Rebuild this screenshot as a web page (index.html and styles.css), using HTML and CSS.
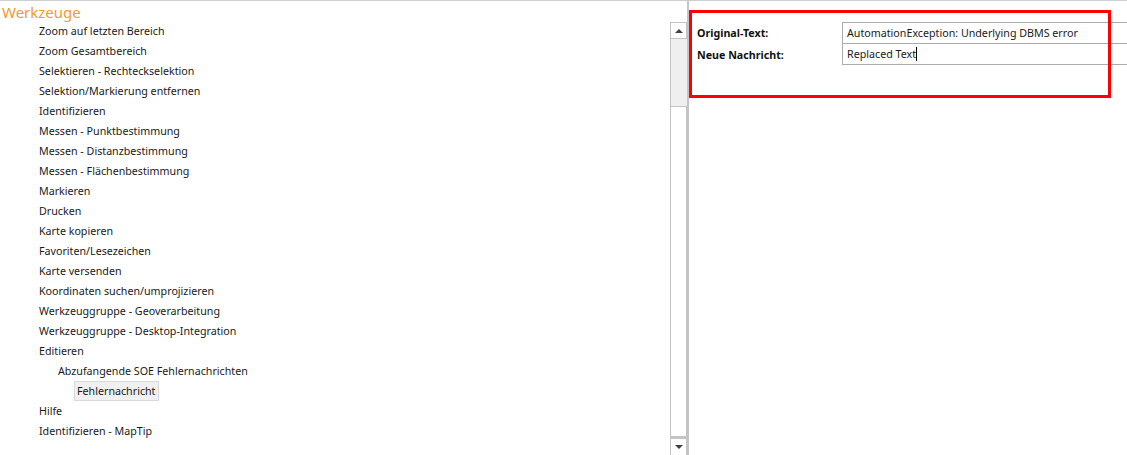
FILE: index.html
```html
<!DOCTYPE html>
<html>
<head>
<meta charset="utf-8">
<link rel="stylesheet" href="styles.css">
</head>
<body>
<div class="app">
  <div class="left">
    <div class="title">Werkzeuge</div>
    <div class="treewrap">
      <ul class="tree">
        <li class="row l1">Zoom auf letzten Bereich</li>
        <li class="row l1">Zoom Gesamtbereich</li>
        <li class="row l1">Selektieren - Rechteckselektion</li>
        <li class="row l1">Selektion/Markierung entfernen</li>
        <li class="row l1">Identifizieren</li>
        <li class="row l1">Messen - Punktbestimmung</li>
        <li class="row l1">Messen - Distanzbestimmung</li>
        <li class="row l1">Messen - Flächenbestimmung</li>
        <li class="row l1">Markieren</li>
        <li class="row l1">Drucken</li>
        <li class="row l1">Karte kopieren</li>
        <li class="row l1">Favoriten/Lesezeichen</li>
        <li class="row l1">Karte versenden</li>
        <li class="row l1">Koordinaten suchen/umprojizieren</li>
        <li class="row l1">Werkzeuggruppe - Geoverarbeitung</li>
        <li class="row l1">Werkzeuggruppe - Desktop-Integration</li>
        <li class="row l1">Editieren</li>
        <li class="row l2">Abzufangende SOE Fehlernachrichten</li>
        <li class="row l3"><span class="selected">Fehlernachricht</span></li>
        <li class="row l1">Hilfe</li>
        <li class="row l1">Identifizieren - MapTip</li>
      </ul>
      <div class="scrollbar">
        <div class="sb-btn"><span class="arrow-up"></span></div>
        <div class="sb-track"></div>
        <div class="sb-thumb"></div>
        <div class="sb-btn sb-down"><span class="arrow-down"></span></div>
      </div>
    </div>
  </div>
  <div class="divider"></div>
  <div class="right">
    <div class="form">
      <div class="label">Original-Text:</div>
      <div class="field first">AutomationException: Underlying DBMS error</div>
      <div class="label">Neue Nachricht:</div>
      <div class="field">Replaced Text<span class="caret"></span></div>
    </div>
    <div class="highlight"></div>
  </div>
</div>
</body>
</html>
```

FILE: styles.css
```css
html, body {
  margin: 0;
  padding: 0;
  background: #ffffff;
  overflow: hidden;
}
body {
  font-family: "Noto Sans", "Open Sans", "DejaVu Sans", sans-serif;
  font-size: 10.7px;
  color: #1a1a1a;
}
.app {
  display: flex;
  width: 1127px;
  height: 455px;
  border-top: 1px solid #cfcfcf;
  box-sizing: border-box;
  overflow: hidden;
}
.left {
  width: 687px;
  display: flex;
  flex-direction: column;
  flex: none;
}
.title {
  height: 20px;
  padding-left: 2px;
  font-size: 15px;
  line-height: 22px;
  color: #f29a33;
}
.treewrap {
  flex: 1;
  display: flex;
  min-height: 0;
}
.tree {
  list-style: none;
  margin: 0;
  padding: 0;
  width: 670px;
  flex: none;
}
.row {
  height: 20px;
  line-height: 20px;
  white-space: nowrap;
}
.l1 { padding-left: 39px; }
.l2 { padding-left: 58px; }
.l3 { padding-left: 74px; }
.selected {
  display: inline-block;
  height: 18px;
  line-height: 18px;
  padding: 0 3px 0 2px;
  background: #f0f0f0;
  border: 1px solid #dadada;
  vertical-align: top;
}
.scrollbar {
  width: 17px;
  margin-top: 1px;
  display: flex;
  flex-direction: column;
  flex: none;
}
.sb-btn {
  height: 15px;
  border: 1px solid #c4c4c4;
  background: #ffffff;
  display: flex;
  align-items: center;
  justify-content: center;
  flex: none;
}
.sb-down {
  height: 16px;
  border-bottom: none;
}
.arrow-up {
  width: 0;
  height: 0;
  border-left: 4px solid transparent;
  border-right: 4px solid transparent;
  border-bottom: 4px solid #404040;
}
.arrow-down {
  width: 0;
  height: 0;
  border-left: 4px solid transparent;
  border-right: 4px solid transparent;
  border-top: 4px solid #404040;
}
.sb-track {
  height: 67px;
  background: #efefef;
  border-left: 1px solid #c4c4c4;
  border-right: 1px solid #efefef;
  flex: none;
}
.sb-thumb {
  flex: 1;
  border: 1px solid #c4c4c4;
  border-bottom: 2px solid #c4c4c4;
  background: #ffffff;
}
.divider {
  width: 2px;
  background: #c4c4c4;
  flex: none;
}
.right {
  position: relative;
  flex: 1;
  padding: 21px 0 0 8px;
}
.form {
  display: grid;
  grid-template-columns: 145px 320px;
}
.label {
  font-weight: bold;
  height: 21px;
  line-height: 22px;
  color: #111111;
}
.field {
  height: 20px;
  line-height: 20px;
  border: 1px solid #ababab;
  border-top: none;
  padding-left: 4px;
}
.field.first {
  border-top: 1px solid #ababab;
  height: 20px;
}
.caret {
  display: inline-block;
  width: 1px;
  height: 14px;
  background: #000;
  vertical-align: -3px;
}
.highlight {
  position: absolute;
  left: 0;
  top: 9px;
  width: 422px;
  height: 88px;
  border: 3px solid #ff0000;
  box-sizing: border-box;
}
```
